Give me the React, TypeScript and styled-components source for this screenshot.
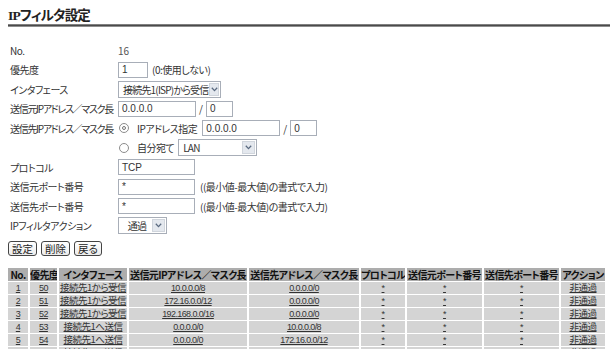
import { FC } from "react";
import styled, { createGlobalStyle } from "styled-components";

const GlobalStyle = createGlobalStyle`
  html, body {
    margin: 0;
    padding: 0;
    background: #ffffff;
  }
  body {
    font-family: "Noto Sans CJK JP", "Liberation Sans", sans-serif;
    font-size: 10px;
    letter-spacing: -0.5px;
    font-feature-settings: "palt" 1;
    color: #333333;
  }
`;

const Page = styled.div`
  width: 610px;
  height: 349px;
  overflow: hidden;
  padding: 8px 0 0 8px;
  box-sizing: border-box;
`;

const Title = styled.h1`
  margin: 0;
  height: 15px;
  font-family: "Liberation Serif", "Noto Sans CJK JP", serif;
  font-size: 13.5px;
  letter-spacing: -0.8px;
  font-weight: bold;
  line-height: 15px;
  color: #222222;
`;

const TitleRule = styled.div`
  height: 3px;
  margin-top: 0.5px;
  background: linear-gradient(#9a9a9a, #4a4a4a 50%, #b0b0b0);
`;

const Form = styled.div`
  display: grid;
  grid-template-columns: 110px 1fr;
  grid-auto-rows: 19.5px;
  margin-top: 14px;
`;

const Label = styled.div<{ $tight?: boolean }>`
  display: flex;
  align-items: center;
  padding-left: 2px;
  white-space: nowrap;
  letter-spacing: ${(p) => (p.$tight ? "-1.3px" : "-0.5px")};
  color: #333333;
`;

const Field = styled.div`
  display: flex;
  align-items: center;
  gap: 4px;
  white-space: nowrap;
`;

const Value = styled.span`
  color: #555555;
  letter-spacing: 0;
`;

const TextBox = styled.div<{ $w: number; $gap?: number }>`
  width: ${(p) => p.$w}px;
  height: 16px;
  margin-left: ${(p) => p.$gap ?? 0}px;
  box-sizing: border-box;
  border: 1px solid #a8aeb8;
  background: #ffffff;
  padding: 0 3px;
  display: flex;
  align-items: center;
  font-family: "Liberation Sans", "Noto Sans CJK JP", sans-serif;
  font-size: 10px;
  letter-spacing: 0;
  color: #333333;
`;

const Slash = styled.span`
  margin: 0 -1px;
  letter-spacing: 0;
`;

const Note = styled.span`
  margin-left: 1px;
`;

const SelectBox = styled.div<{ $w: number; $center?: boolean }>`
  width: ${(p) => p.$w}px;
  height: 17px;
  box-sizing: border-box;
  border: 1px solid #a8aeb8;
  background: #ffffff;
  display: flex;
  align-items: center;
  padding-left: 4px;
  font-size: 10px;
  letter-spacing: -0.8px;
  color: #333333;
  span {
    flex: 1;
    text-align: ${(p) => (p.$center ? "center" : "left")};
  }
`;

const SelectArrow = styled.div`
  width: 13px;
  height: 13px;
  margin: 0 1px;
  background: #e4e8ee;
  border: 1px solid #d0d5dc;
  box-sizing: border-box;
  display: flex;
  align-items: center;
  justify-content: center;
`;

const Radio = styled.span<{ $on?: boolean }>`
  width: 10px;
  height: 10px;
  margin: 0 4px 0 1px;
  border-radius: 50%;
  border: 1px solid #8c8c8c;
  box-sizing: border-box;
  display: inline-flex;
  align-items: center;
  justify-content: center;
  &::after {
    content: "";
    width: 2px;
    height: 2px;
    border-radius: 50%;
    border: 1px solid #777777;
    display: ${(p) => (p.$on ? "block" : "none")};
  }
`;

const Buttons = styled.div`
  display: flex;
  gap: 4px;
  margin-top: 5px;
`;

const Button = styled.div`
  height: 15px;
  box-sizing: border-box;
  padding: 0 3px;
  border: 1px solid #444444;
  border-radius: 3px;
  background: linear-gradient(#ffffff, #ececec);
  display: flex;
  align-items: center;
  font-size: 10.5px;
  letter-spacing: 0;
  color: #222222;
`;

const Table = styled.table`
  width: 601px;
  margin: 11px 0 0 -2px;
  border-collapse: separate;
  border-spacing: 2px 1px;
  table-layout: fixed;
`;

const Th = styled.th<{ $w: number }>`
  width: ${(p) => p.$w}px;
  height: 13px;
  padding: 0;
  background: #adadad;
  font-size: 10px;
  letter-spacing: -0.6px;
  font-weight: bold;
  color: #111111;
  white-space: nowrap;
  overflow: hidden;
  text-align: center;
  line-height: 13px;
`;

const Td = styled.td`
  height: 11px;
  padding: 0;
  background: #d4d4d4;
  text-align: center;
  white-space: nowrap;
  overflow: hidden;
  line-height: 11px;
  font-size: 9.5px;
  a {
    color: #333333;
    text-decoration: underline;
  }
`;

const Num = styled.a`
  font-family: "Liberation Sans", sans-serif;
  font-size: 9px;
  letter-spacing: -0.6px;
`;

const Arrow: FC = () => (
  <SelectArrow>
    <svg width="7" height="5" viewBox="0 0 7 5">
      <path d="M0.8 0.8 L3.5 3.6 L6.2 0.8" fill="none" stroke="#5a6a80" strokeWidth="1.3" />
    </svg>
  </SelectArrow>
);

const columns = [
  { label: "No.", w: 20 },
  { label: "優先度", w: 27 },
  { label: "インタフェース", w: 68 },
  { label: "送信元IPアドレス／マスク長", w: 118 },
  { label: "送信先アドレス／マスク長", w: 110 },
  { label: "プロトコル", w: 44 },
  { label: "送信元ポート番号", w: 75 },
  { label: "送信先ポート番号", w: 75 },
  { label: "アクション", w: 44 },
];

const filters = [
  { no: 1, pri: 50, iface: "接続先1から受信", src: "10.0.0.0/8", dst: "0.0.0.0/0" },
  { no: 2, pri: 51, iface: "接続先1から受信", src: "172.16.0.0/12", dst: "0.0.0.0/0" },
  { no: 3, pri: 52, iface: "接続先1から受信", src: "192.168.0.0/16", dst: "0.0.0.0/0" },
  { no: 4, pri: 53, iface: "接続先1へ送信", src: "0.0.0.0/0", dst: "10.0.0.0/8" },
  { no: 5, pri: 54, iface: "接続先1へ送信", src: "0.0.0.0/0", dst: "172.16.0.0/12" },
  { no: 6, pri: 55, iface: "接続先1へ送信", src: "0.0.0.0/0", dst: "192.168.0.0/16" },
];

const App: FC = () => {
  return (
    <Page>
      <GlobalStyle />
      <Title>IPフィルタ設定</Title>
      <TitleRule />

      <Form>
        <Label>No.</Label>
        <Field>
          <Value>16</Value>
        </Field>

        <Label>優先度</Label>
        <Field>
          <TextBox $w={30}>1</TextBox>
          <span>(0:使用しない)</span>
        </Field>

        <Label>インタフェース</Label>
        <Field>
          <SelectBox $w={103}>
            <span>接続先1(ISP)から受信</span>
            <Arrow />
          </SelectBox>
        </Field>

        <Label $tight>送信元IPアドレス／マスク長</Label>
        <Field>
          <TextBox $w={78}>0.0.0.0</TextBox>
          <Slash>/</Slash>
          <TextBox $w={27}>0</TextBox>
        </Field>

        <Label $tight>送信先IPアドレス／マスク長</Label>
        <Field>
          <Radio $on />
          <span>IPアドレス指定</span>
          <TextBox $w={78} $gap={1}>0.0.0.0</TextBox>
          <Slash>/</Slash>
          <TextBox $w={27}>0</TextBox>
        </Field>

        <Label />
        <Field>
          <Radio />
          <span>自分宛て</span>
          <SelectBox $w={79}>
            <span>LAN</span>
            <Arrow />
          </SelectBox>
        </Field>

        <Label>プロトコル</Label>
        <Field>
          <TextBox $w={77}>TCP</TextBox>
        </Field>

        <Label>送信元ポート番号</Label>
        <Field>
          <TextBox $w={77}>*</TextBox>
          <Note>((最小値-最大値)の書式で入力)</Note>
        </Field>

        <Label>送信先ポート番号</Label>
        <Field>
          <TextBox $w={77}>*</TextBox>
          <Note>((最小値-最大値)の書式で入力)</Note>
        </Field>

        <Label>IPフィルタアクション</Label>
        <Field>
          <SelectBox $w={49} $center>
            <span>通過</span>
            <Arrow />
          </SelectBox>
        </Field>
      </Form>

      <Buttons>
        <Button>設定</Button>
        <Button>削除</Button>
        <Button>戻る</Button>
      </Buttons>

      <Table>
        <thead>
          <tr>
            {columns.map((c) => (
              <Th key={c.label} $w={c.w}>
                {c.label}
              </Th>
            ))}
          </tr>
        </thead>
        <tbody>
          {filters.map((f) => (
            <tr key={f.no}>
              <Td><Num>{f.no}</Num></Td>
              <Td><Num>{f.pri}</Num></Td>
              <Td><a>{f.iface}</a></Td>
              <Td><Num>{f.src}</Num></Td>
              <Td><Num>{f.dst}</Num></Td>
              <Td><Num>*</Num></Td>
              <Td><Num>*</Num></Td>
              <Td><Num>*</Num></Td>
              <Td><a>非通過</a></Td>
            </tr>
          ))}
        </tbody>
      </Table>
    </Page>
  );
};

export default App;
